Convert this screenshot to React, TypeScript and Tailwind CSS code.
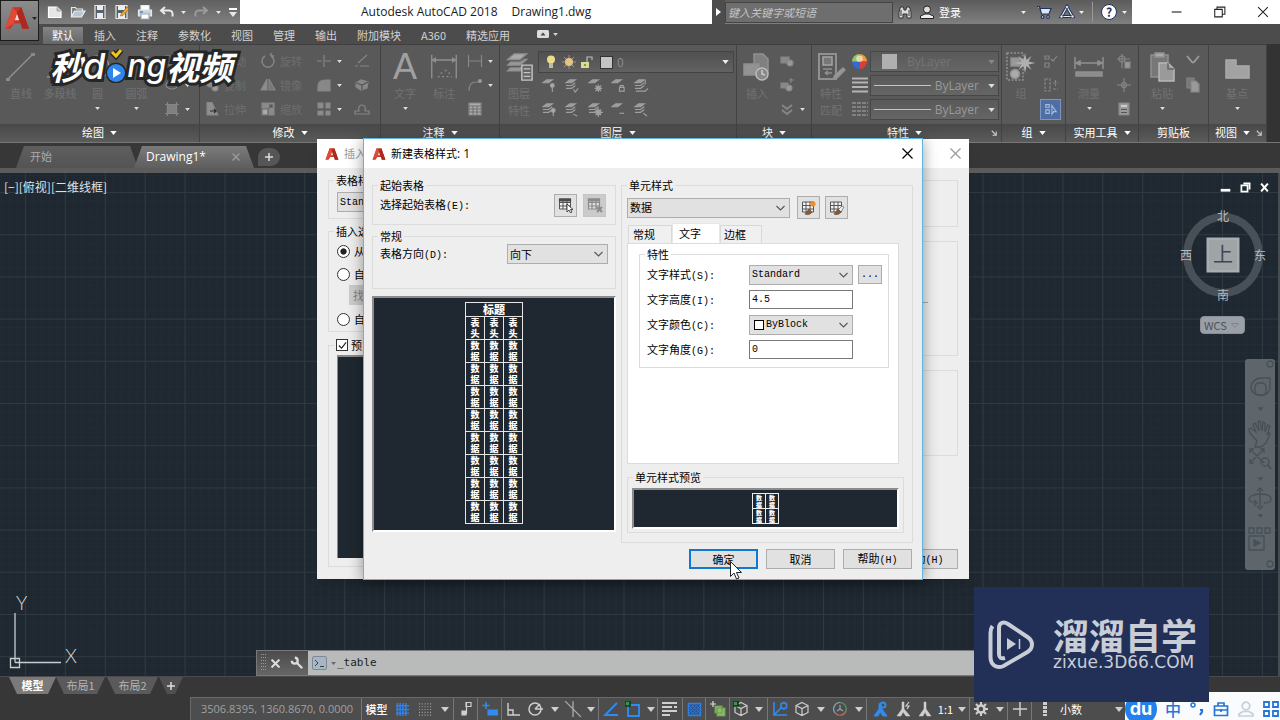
import React from "react";

type Kids = { children?: React.ReactNode };

/* ---------- small helpers ---------- */

function Tri({ className = "h-1 w-[7px]" }: { className?: string }) {
  return (
    <svg viewBox="0 0 8 5" className={`${className} shrink-0`} fill="currentColor" aria-hidden="true">
      <path d="M0 0h8L4 5z" />
    </svg>
  );
}

function I16({ children, className = "h-4 w-4" }: Kids & { className?: string }) {
  return (
    <svg viewBox="0 0 16 16" className={`${className} shrink-0`} fill="none" stroke="currentColor" strokeWidth="1.2" aria-hidden="true">
      {children}
    </svg>
  );
}

function I32({ children, className = "h-8 w-8" }: Kids & { className?: string }) {
  return (
    <svg viewBox="0 0 32 32" className={`${className} shrink-0`} fill="none" stroke="currentColor" strokeWidth="1.5" aria-hidden="true">
      {children}
    </svg>
  );
}

function ALogo({ className = "h-[14px] w-[14px]" }: { className?: string }) {
  return (
    <svg viewBox="0 0 24 24" className={className} aria-hidden="true">
      <path d="M1 22 8 2h8l7 20h-6l-1.500-5H9l-3 5z" fill="#c8352a" />
      <path d="m8 2-7 20 8-5 3-10z" fill="#e04a38" />
      <path d="m12 8-2 6h4z" fill="#f4dcd7" />
      <path d="M16 2 12 7l5 15h6z" fill="#ad281e" />
    </svg>
  );
}

/* ---------- title bar ---------- */

function QuickAccess() {
  return (
    <div className="flex h-6 w-[201px] shrink-0 items-center bg-gradient-to-b from-[#606060] to-[#808080] pl-1 text-[#e8e8e8]">
      <button aria-label="新建" className="flex w-[23px] justify-center">
        <I16><path d="M1.500 3h8.500l4 4v6.500H1.500z" fill="#e6e6e6" stroke="#fff" /><path d="M10 3v4h4" fill="#bbb" stroke="#999" strokeWidth=".8" /></I16>
      </button>
      <button aria-label="打开" className="flex w-[23px] justify-center">
        <I16><path d="M1.500 13V3.500h4l1 1.500h6v2" fill="#777" /><path d="m1.500 13 3-6h10.500l-3.500 6z" fill="#b9c6d3" stroke="#eee" /></I16>
      </button>
      <button aria-label="保存" className="flex w-[22px] justify-center">
        <I16><path d="M3 1.500h10v13H3z" fill="#56616e" stroke="#e8e8e8" /><path d="M5 2h6v4H5zM5 9h6v5H5z" fill="#eee" stroke="none" /></I16>
      </button>
      <button aria-label="另存为" className="flex w-[22px] justify-center">
        <I16><path d="M2 1.500h11v13H2z" fill="#56616e" stroke="#e8e8e8" /><path d="M4 2h7v4H4zM4 9h7v5H4z" fill="#eee" stroke="none" /><path d="m7 10 6-7 2 2-6 6.500-2.500.5z" fill="#f0a830" stroke="#7a5518" strokeWidth=".5" /></I16>
      </button>
      <button aria-label="打印" className="flex w-6 justify-center">
        <I16><path d="M4 1.500h8V6H4z" fill="#fff" /><path d="M1.500 6h13v6h-13z" fill="#c9d2dc" /><path d="M4 10h8v5H4z" fill="#fff" stroke="#9ab" /><path d="M3 8h3" stroke="#3d6fa8" /></I16>
      </button>
      <button aria-label="放弃" className="flex w-5 justify-center">
        <I16><path d="M6 3 2 6.500 6 10M2 6.500h8c3 0 4 2 3.500 6" strokeWidth="2" /></I16>
      </button>
      <Tri className="mx-1 h-[3px] w-[5px]" />
      <button aria-label="重做" className="flex w-[22px] justify-center text-[#9a9a9a]">
        <I16><path d="m10 3 4 3.500-4 3.500M14 6.500H6c-3 0-4 2-3.500 6" strokeWidth="2" /></I16>
      </button>
      <Tri className="mx-1 h-[3px] w-[5px]" />
      <button aria-label="自定义" className="ml-1 flex flex-col items-center gap-[2px]">
        <span className="h-[2px] w-2 bg-white" />
        <Tri className="h-[5px] w-2" />
      </button>
    </div>
  );
}

function TitleBar() {
  return (
    <div className="flex h-6 bg-white">
      <QuickAccess />
      <div className="flex min-w-0 flex-1 items-center gap-[14px] pl-[121px] text-[12px] whitespace-nowrap text-[#1c1c1c] [font-family:'Open_Sans','Noto_Sans_CJK_SC',sans-serif]">
        <span>Autodesk AutoCAD 2018</span>
        <span>Drawing1.dwg</span>
      </div>
      <div className="flex h-6 w-[420px] shrink-0 items-center bg-gradient-to-b from-[#5c5c5c] to-[#808080] text-[#eee]">
        <button aria-label="展开" className="flex h-6 w-[13px] items-center justify-center bg-[#4d4d4d]">
          <svg viewBox="0 0 5 8" className="h-2 w-[5px]" fill="#fff"><path d="M0 0v8l5-4z" /></svg>
        </button>
        <input aria-label="搜索" placeholder="键入关键字或短语" className="h-[21px] w-[168px] border border-[#444] bg-[#6e6e6e] pl-[2px] text-[11px] italic outline-none placeholder:text-[#c4c4c4]" />
        <button aria-label="查找" className="ml-1 flex w-4">
          <I16><path d="M2 14V8l1.500-5h3L7 6h2l.5-3h3L14 8v6h-4v-4H6v4z" fill="#ddd" stroke="#333" strokeWidth="1" /><path d="M4 6v6M12 6v6" stroke="#555" /></I16>
        </button>
        <button className="ml-[6px] flex items-center gap-1 text-[11px] text-white">
          <I16><circle cx="8" cy="5.500" r="3.500" fill="#ddd" stroke="#222" strokeWidth="1" /><path d="M1.500 14.500V12l4.500-2h4l4.500 2v2.500z" fill="#eee" stroke="#222" strokeWidth="1" /></I16>
          登录
        </button>
        <Tri className="mr-[10px] ml-auto h-[3px] w-[5px]" />
        <button aria-label="商店" className="flex w-4">
          <I16><path d="M1 2.500h2.500L5.500 10h7.500l2-5.500H4" fill="#dfe6f2" stroke="#1f3560" /><circle cx="6.500" cy="13" r="1.300" fill="#fff" stroke="#1f3560" /><circle cx="12" cy="13" r="1.300" fill="#fff" stroke="#1f3560" /></I16>
        </button>
        <button aria-label="应用" className="ml-[7px] flex w-4">
          <I16><path d="m8 3-5.500 9.500h11z" stroke="#1f3560" strokeWidth="3.200" /><path d="m8 3-5.500 9.500h11z" stroke="#e4e9f4" strokeWidth="1.200" /><circle cx="8" cy="3" r="1.600" fill="#e4e9f4" stroke="#1f3560" strokeWidth=".7" /><circle cx="2.500" cy="12.500" r="1.600" fill="#e4e9f4" stroke="#1f3560" strokeWidth=".7" /><circle cx="13.500" cy="12.500" r="1.600" fill="#e4e9f4" stroke="#1f3560" strokeWidth=".7" /></I16>
        </button>
        <Tri className="mx-1 h-[3px] w-[5px]" />
        <span className="mx-1 h-5 w-px bg-[#999]" />
        <button aria-label="帮助" className="ml-1 flex h-4 w-4 items-center justify-center rounded-full border border-[#1f3560] bg-white text-[12px] leading-none font-bold text-[#1f3560]">?</button>
        <Tri className="mr-[5px] ml-[5px] h-[3px] w-[5px]" />
      </div>
      <div className="flex w-[148px] shrink-0 items-center bg-white pl-[39px] text-[#222]">
        <button aria-label="最小化" className="flex w-[43px]"><I16 className="h-3 w-3"><path d="M1 8h13" strokeWidth="1.500" /></I16></button>
        <button aria-label="还原" className="flex w-[43px]"><I16 className="h-3 w-3"><path d="M1 4.500h10v10H1zM4 4.500V1.500h10.500V11H11" strokeWidth="1.400" /></I16></button>
        <button aria-label="关闭" className="flex"><I16 className="h-3 w-3"><path d="m1.500 1.500 13 13m0-13-13 13" strokeWidth="1.400" /></I16></button>
      </div>
    </div>
  );
}

const RIBBON_TABS = ["默认", "插入", "注释", "参数化", "视图", "管理", "输出", "附加模块", "A360", "精选应用"];

function RibbonTabs() {
  return (
    <nav className="flex h-5 items-end gap-[2px] bg-[#4c4c4c] pl-1 text-[11px] text-[#d2d2d2]">
      {RIBBON_TABS.map((t, i) => (
        <button
          key={t}
          className={
            i === 0
              ? "h-[17px] bg-gradient-to-b from-[#858585] to-[#666] px-[9px] leading-[15px] text-white"
              : "h-[17px] px-[9px] leading-[15px]"
          }
        >
          {t}
        </button>
      ))}
      <button aria-label="功能区选项" className="mb-[6px] ml-4 flex items-center gap-1">
        <svg viewBox="0 0 12 8" className="h-2 w-3"><rect width="12" height="8" rx="1.500" fill="#ddd" /><path d="m3.500 5.500 2.500-3 2.500 3z" fill="#444" /></svg>
        <Tri className="h-[3px] w-[5px]" />
      </button>
    </nav>
  );
}

/* ---------- ribbon ---------- */

function Panel({ title, width, arrow = true, launcher, children }: Kids & { title: string; width: string; arrow?: boolean; launcher?: boolean }) {
  return (
    <section className={`${width} flex h-full shrink-0 flex-col border-r border-[#424242]`}>
      <div className="flex h-[80px] items-start border-t border-[#3f3f3f] bg-[#595959] pt-1">{children}</div>
      <h2 className="flex flex-1 items-center justify-center gap-[6px] bg-gradient-to-b from-[#484848] to-[#5b5b5b] pb-px text-[11px] leading-none text-white">
        {launcher && <span className="w-2 flex-1" />}
        {title}
        {arrow && <Tri className="h-1 w-[7px]" />}
        {launcher && (
          <span className="flex flex-1 justify-end pr-1">
            <svg viewBox="0 0 8 8" className="h-[6px] w-[6px]" fill="none" stroke="#ccc" strokeWidth="1.500"><path d="m1 1 5.500 5.500M7 2v5H2" /></svg>
          </span>
        )}
      </h2>
    </section>
  );
}

function Big({ icon, label, label2, arrow, width = "w-[39px]" }: { icon: React.ReactNode; label: string; label2?: string; arrow?: boolean; width?: string }) {
  return (
    <button className={`${width} flex shrink-0 flex-col items-center text-[#909090]`}>
      <span className="flex h-9 items-center">{icon}</span>
      <span className="text-[11px] leading-[17px] whitespace-nowrap text-[#727272]">{label}</span>
      {label2 && <span className="text-[11px] leading-[17px] text-[#727272]">{label2}</span>}
      {arrow && <span className="flex h-3 items-center text-[#ddd]"><Tri className="h-[3px] w-[5px]" /></span>}
    </button>
  );
}

function Small({ icon, label, arrow, on }: { icon: React.ReactNode; label?: string; arrow?: boolean; on?: boolean }) {
  return (
    <button className="flex h-6 items-center gap-1 text-[#868686]" aria-label={label ?? "工具"}>
      <span className={on ? "flex h-[21px] w-[21px] items-center justify-center border border-[#7b96c4] bg-[#4f6ea3]" : "flex"}>{icon}</span>
      {label && <span className="text-[11px] text-[#6e6e6e]">{label}</span>}
      {arrow && <Tri className="ml-px h-[3px] w-[5px] text-[#ddd]" />}
    </button>
  );
}

function Col({ children, className = "" }: Kids & { className?: string }) {
  return <div className={`flex shrink-0 flex-col ${className}`}>{children}</div>;
}

function LayerMini({ children, full }: Kids & { full?: boolean }) {
  return (
    <button aria-label="图层工具" className="flex w-[23px] justify-center text-[#a0a0a0]">
      <svg viewBox="0 0 16 16" className="h-[15px] w-[15px]" fill="none" stroke="currentColor" strokeWidth="1.200">
        <path d="m1 5 4-3h6L7 5z" fill="#9c9c9c" />
        {full && <path d="M1 8h6l4-3M1 11h6l4-3" />}
        {children}
      </svg>
    </button>
  );
}

function ByLayerRow({ dim }: { dim?: boolean }) {
  return (
    <div className="flex h-[21px] items-center gap-1 border border-[#474747] bg-gradient-to-b from-[#5a5a5a] to-[#656565] px-[3px]">
      {dim ? <span className="ml-2 h-[15px] w-[15px] bg-[#b0b0b0]" /> : <span className="h-px flex-1 bg-[#c4c4c4]" />}
      <span className={dim ? "ml-[6px] flex-1 text-[12px] text-[#747474] [font-family:'Open_Sans',sans-serif]" : "text-[12px] text-[#999] [font-family:'Open_Sans',sans-serif]"}>ByLayer</span>
      <span className={dim ? "flex w-3 justify-end text-[#888]" : "flex w-3 justify-end text-[#ddd]"}><Tri className="h-1 w-[7px]" /></span>
    </div>
  );
}

function Ribbon() {
  return (
    <div className="flex h-[99px] shrink-0 border-b border-[#777] bg-gradient-to-r from-[#555] via-[#555] to-[#333]">
      <Panel title="绘图" width="w-[200px]">
        <Big label="直线" width="w-[42px]" icon={<I32><path d="M3 28 28 3" /><path d="M1 27h4v3H1zM26 2h4v3h-4z" fill="#8a8a8a" stroke="none" /></I32>} />
        <Big label="多段线" width="w-9" icon={<I32><path d="M3 26h12V10h10" /></I32>} />
        <Big label="圆" arrow icon={<I32><circle cx="16" cy="16" r="11" /></I32>} />
        <Big label="圆弧" arrow icon={<I32><path d="M5 27C7 14 14 7 28 6" /></I32>} />
        <Col className="ml-2">
          <Small arrow icon={<I16><path d="M2 3h12v9H2z" /></I16>} />
          <Small arrow icon={<I16><ellipse cx="8" cy="8" rx="6" ry="4" /></I16>} />
          <Small arrow icon={<I16><path d="M3.500 3.500h9v9h-9z" fill="#808080" /><path d="M1 3.500h14M1 12.500h14M3.500 1v14M12.500 1v14" /></I16>} />
        </Col>
      </Panel>
      <Panel title="修改" width="w-[181px]">
        <Col className="ml-1 w-[56px]">
          <Small label="移动" icon={<I16><path d="M8 1v14M1 8h14" /></I16>} />
          <Small label="复制" icon={<I16><circle cx="6" cy="7" r="3" fill="#8c8c8c" /><circle cx="11" cy="11" r="3" fill="#999" /></I16>} />
          <Small label="拉伸" icon={<I16><path d="M3 1.500h5l6 12.500H3z" fill="#8e8e8e" /><path d="M6 10h6m-2-2 2 2-2 2" stroke="#2c2c2c" /></I16>} />
        </Col>
        <Col className="w-[54px]">
          <Small label="旋转" icon={<I16><path d="M5 3a6 6 0 1 0 6 0M11 3V0M11 3h3" strokeWidth="1.500" /></I16>} />
          <Small label="镜像" icon={<I16><path d="m7 2v11H1z" fill="#8e8e8e" /><path d="m9 2v11h6z" fill="#777" /></I16>} />
          <Small label="缩放" icon={<I16><path d="M2 2h12v12H2z" fill="#8a8a8a" /><path d="M2 8h6v6H2z" fill="#aaa" stroke="#666" /><path d="m9 7 3-3m-3 0h3v3" stroke="#555" /></I16>} />
        </Col>
        <Col className="ml-[2px] w-[38px]">
          <Small arrow icon={<I16><path d="M1 8h5M9 8h6M8 2v12" /></I16>} />
          <Small arrow icon={<I16><path d="M2 14V9c0-4 3-6 7-6h5v11z" fill="#888" /></I16>} />
          <Small arrow icon={<I16><path d="M2 2h5v5H2zM10 2h4v5h-4zM2 10h5v4H2zM10 10h4v4h-4z" fill="#8c8c8c" /></I16>} />
        </Col>
        <Col>
          <Small icon={<I16><path d="M1 13h3M6 13h9M4 10l9-8" /></I16>} />
          <Small icon={<I16><path d="m2 6 5-3 7 2-1 6-6 2-5-3z" fill="#888" /><path d="m2 6 6 2 6-3M8 8v5" stroke="#555" /></I16>} />
          <Small icon={<I16><path d="M1 13h14v-3h-4c1-3 0-6-3-6S4 7 5 10H1z" /></I16>} />
        </Col>
      </Panel>
      <Panel title="注释" width="w-[119px]">
        <Big label="文字" arrow width="w-12" icon={<span className="text-[36px] leading-9 text-[#a0a0a0] [font-family:'Liberation_Sans',sans-serif]">A</span>} />
        <Big label="标注" width="w-[30px]" icon={<I32 className="h-7 w-7"><path d="M2 2v27M30 2v27M3 8h26M3 8l3-2v4zM29 8l-3-2v4z" /><path d="M12 23h2m3-3h2m2 3h2M9 27h2m3 0h2m3 0h2m3 0h1" /></I32>} />
        <Col className="ml-2">
          <Small arrow icon={<I16><path d="M1.500 2v12M14.500 2v12M2 8h12" /></I16>} />
          <Small arrow icon={<I16><path d="M2 14c0-6 2-9 7-9h4" /><circle cx="13" cy="4" r="2" fill="#999" stroke="none" /></I16>} />
          <Small icon={<I16><path d="M2 2h12v12H2z" fill="#aaa" /><path d="M2 5h12M2 8h12M2 11h12M6 5v9M10 5v9" stroke="#666" strokeWidth=".8" /></I16>} />
        </Col>
      </Panel>
      <Panel title="图层" width="w-[237px]">
        <Big label="图层" label2="特性" width="w-[38px]" icon={<I32 className="h-[30px] w-[30px]"><path d="m4 8 7-6h13l-7 6z" fill="#aaa" /><path d="m4 14 3-3h10l5-3h2l-7 6zM4 20l3-3h10l2-1v3l-2 1z" fill="#999" /><path d="M19 14h11v16H19z" fill="#666" stroke="#c4c4c4" /><path d="M21 18h7m-7 4h7m-7 4h7" stroke="#c4c4c4" /></I32>} />
        <div className="flex flex-1 flex-col pr-[2px]">
          <div className="mt-[2px] flex h-[22px] items-center border border-[#444] bg-gradient-to-b from-[#505050] to-[#616161] pr-1 pl-1 text-[12px] text-[#8b8b8b]">
            <I16><circle cx="8" cy="5.500" r="4" fill="#e9dc8a" stroke="none" /><path d="M6 9h4v5H6z" fill="#bba" stroke="none" /></I16>
            <I16 className="ml-[2px] h-4 w-4"><path d="M8 1v14M1 8h14M3 3l10 10M13 3 3 13" stroke="#b8a583" strokeWidth=".8" /><circle cx="8" cy="8" r="4" fill="#e3c48a" stroke="none" /></I16>
            <I16 className="ml-[2px] h-4 w-4"><path d="M2 8h8v6H2z" fill="#d9dc8c" stroke="none" /><path d="M8 8V3h5v3" stroke="#bbb" /><path d="M6 10v2" stroke="#555" /></I16>
            <span className="ml-[5px] h-[13px] w-[13px] border border-[#333] bg-[#c4c4c4]" />
            <span className="ml-1 flex-1">0</span>
            <span className="text-[#eee]"><Tri className="h-1 w-[7px]" /></span>
          </div>
          <div className="flex h-6 items-center text-[#999]">
            <LayerMini><circle cx="11" cy="8" r="2" fill="#aaa" /><path d="M11 10v5" /></LayerMini>
            <LayerMini full><path d="m9 12 2 3 3-4" /></LayerMini>
            <LayerMini><circle cx="11" cy="11" r="2" fill="#888" /><path d="M11 7v8M7 11h8M8 8l6 6M14 8l-6 6" /></LayerMini>
            <LayerMini><path d="M9 10h5v4H9zM10 10V8h3v2" /></LayerMini>
            <LayerMini full><path d="M2 14h10l3-3M12 2v5" /></LayerMini>
          </div>
          <div className="flex h-6 items-center text-[#999]">
            <LayerMini full><circle cx="12" cy="9" r="2" fill="#aaa" /><path d="M12 11v4" /></LayerMini>
            <LayerMini full><path d="m9 13 4 2" /></LayerMini>
            <LayerMini full><circle cx="11" cy="11" r="2.500" fill="#888" /><path d="M11 6v10M6 11h10M8 8l6 6M14 8l-6 6" /></LayerMini>
            <LayerMini><path d="M9 12h5" /></LayerMini>
            <LayerMini full><path d="m10 12 4 3" /></LayerMini>
          </div>
        </div>
      </Panel>
      <Panel title="块" width="w-[75px]">
        <Big label="插入" width="w-[40px]" icon={<I32><path d="M13 3h9l5 5v14H13z" fill="#808080" /><path d="M3 13h15v11H3z" fill="#939393" /><circle cx="21" cy="23" r="6" fill="#888" stroke="#bbb" /><path d="M21 19v4l3 1" stroke="#ccc" /></I32>} />
        <Col className="ml-[2px]">
          <Small icon={<I16><path d="M2 4h8v6H2z" fill="#888" /><circle cx="11" cy="10" r="3" fill="#999" /></I16>} />
          <Small icon={<I16><path d="M2 6h7v5H2z" fill="#888" /><circle cx="10" cy="11" r="3" fill="#999" /><path d="M12 1v5M10 3h5" /></I16>} />
          <Small arrow icon={<I16><path d="m3 4 5 4 5-4M3 9l5 4 5-4" strokeWidth="2" /></I16>} />
        </Col>
      </Panel>
      <Panel title="特性" width="w-[190px]" launcher>
        <Big label="特性" label2="匹配" width="w-[38px]" icon={<I32><path d="M4 3h17v25H4z" strokeWidth="2" /><path d="M8 6h9v8H8z" fill="#777" stroke="#a5a5a5" /><path d="M8 18h9m-7 4 3-2m-3 2 3 2m-3-2h7" /><path d="m20 24 8-7 2 2-8 8-4 1z" fill="#999" /></I32>} />
        <Col className="ml-[2px] w-[18px]">
          <div className="flex h-6 items-center">
            <svg viewBox="0 0 16 16" className="h-[15px] w-[15px]" aria-hidden="true">
              <path d="M8 8V0a8 8 0 0 1 8 8z" fill="#ef9a3c" /><path d="M8 8h8a8 8 0 0 1-8 8z" fill="#d8403c" /><path d="M8 8v8a8 8 0 0 1-8-8z" fill="#3568d8" /><path d="M8 8H0a8 8 0 0 1 8-8z" fill="#8fc86a" /><circle cx="8" cy="5" r="3.500" fill="#f6edd0" opacity=".7" />
            </svg>
          </div>
          <Small icon={<I16><path d="M0 1.500h16M0 5.500h16M0 10h16M0 14.500h16" strokeWidth="2.200" stroke="#b4b4b4" /></I16>} />
          <Small icon={<I16><path d="M0 2h16M0 6h16M0 10h16M0 14h16" strokeDasharray="4 1" stroke="#aaa" /></I16>} />
        </Col>
        <div className="flex flex-1 flex-col gap-[3px] pt-[2px] pr-[2px]">
          <ByLayerRow dim />
          <ByLayerRow />
          <ByLayerRow />
        </div>
      </Panel>
      <Panel title="组" width="w-[64px]">
        <Big label="组" width="w-[38px]" icon={<I32><path d="M2 2h16v27H2z" strokeDasharray="2 1.500" /><path d="M6 7h9v8H6z" fill="#999" /><circle cx="10" cy="23" r="4.500" fill="#aaa" /><path d="m20 2 1.500 7 5-4-3 5.500 7 1.500-7 1.500 3 5.500-5-4-1.500 7-1.500-7-5 4 3-5.500-7-1.500 7-1.500-3-5.500 5 4z" fill="#b0b0b0" stroke="none" /></I32>} />
        <Col className="items-center">
          <Small icon={<I16><path d="M2 3h4v3H2zM2 10h4v4H2zM8 6l2 2 4-5" /></I16>} />
          <Small icon={<I16><path d="M2 2h5v12H2zM10 6h5M12.500 3v6M10 12h5" strokeDasharray="3 1" /></I16>} />
          <Small on icon={<I16 className="h-[14px] w-[14px] text-[#a9bddf]"><path d="M2 3h4v3H2zM2 9h4v4H2zM9 4v10l2-3h3z" /></I16>} />
        </Col>
      </Panel>
      <Panel title="实用工具" width="w-[73px]">
        <Big label="测量" arrow width="w-[46px]" icon={<I32><path d="M2 6v12M30 6v12M3 12h26M3 12l4-2v4zM29 12l-4-2v4z" /><path d="M3 21h26v4H3z" fill="#8c8c8c" /></I32>} />
        <Col className="ml-1">
          <Small icon={<I16><path d="M6 1v14M1 6h13" /><circle cx="6" cy="6" r="3" /><path d="M9 9h5v6H9z" fill="#999" /></I16>} />
          <Small icon={<I16><path d="M8 1v14M1 8h14" /><circle cx="8" cy="8" r="2.500" /></I16>} />
          <Small icon={<I16><path d="M3 2h10v12H3z" fill="#9a9a9a" /><path d="M5 4h6v2H5z" fill="#ccc" stroke="none" /><path d="M5 8.500h6M5 11.500h6" stroke="#555" /></I16>} />
        </Col>
      </Panel>
      <Panel title="剪贴板" width="w-[70px]" arrow={false}>
        <Big label="粘贴" arrow width="w-[46px]" icon={<I32><path d="M5 4h17v22H5z" fill="#777" /><path d="M9 2h9v4H9z" fill="#aaa" /><path d="M13 12h9l6 6v12H13z" fill="#9a9a9a" stroke="#b8b8b8" /><path d="M22 12v6h6" stroke="#666" /></I32>} />
        <Col>
          <Small icon={<I16><path d="m2 3 5 6 1 .5 1-.5 5-6" strokeWidth="1.800" stroke="#9c9c9c" /></I16>} />
          <Small icon={<I16><path d="M2 1h7v10H2z" fill="#777" /><path d="M6 4h5l3 3v8H6z" fill="#999" /></I16>} />
        </Col>
      </Panel>
      <Panel title="视图" width="w-[58px]" launcher>
        <Big label="基点" arrow width="w-14" icon={<I32><path d="M5 9h10v6h13v12H5z" fill="#a2a2a2" stroke="#ababab" /></I32>} />
      </Panel>
    </div>
  );
}

/* ---------- drawing area ---------- */

function FileTabs() {
  return (
    <div className="flex h-[30px] shrink-0 flex-col border-b-[5px] border-[#5c5c5c] bg-[#373737] pt-[3px]">
      <div className="flex h-[22px] items-stretch pl-4 text-[12px] [font-family:'Open_Sans','Noto_Sans_CJK_SC',sans-serif]">
        <button className="w-[122px] rounded-t-lg bg-gradient-to-b from-[#5f5f5f] to-[#545454] pl-[14px] text-left text-[11px] text-[#aaa] [clip-path:polygon(8px_0,calc(100%-8px)_0,100%_100%,0_100%)]">开始</button>
        <div className="-ml-1 flex w-[120px] items-center rounded-t-lg bg-gradient-to-b from-[#7b7b7b] to-[#5e5e5e] pr-[14px] pl-3 text-white [clip-path:polygon(8px_0,calc(100%-8px)_0,100%_100%,0_100%)]">
          <span className="flex-1">Drawing1*</span>
          <button aria-label="关闭图形" className="flex text-[#999]"><I16 className="h-2 w-2"><path d="m1 1 14 14M15 1 1 15" strokeWidth="3" /></I16></button>
        </div>
        <button aria-label="新图形" className="my-[2px] ml-1 flex w-[22px] items-center justify-center rounded-t-xl rounded-br-xl bg-[#565656] text-[#ddd]"><I16 className="h-2 w-2"><path d="M8 0v16M0 8h16" strokeWidth="3" /></I16></button>
      </div>
    </div>
  );
}

function Grid() {
  return (
    <svg className="absolute inset-0 h-full w-full" aria-hidden="true">
      <defs>
        <pattern id="minor" width="7.980" height="8.440" patternUnits="userSpaceOnUse" patternTransform="translate(25 19)">
          <path d="M0 0v9M0 0h8" stroke="#232d36" strokeWidth="1" fill="none" />
        </pattern>
        <pattern id="major" width="39.900" height="42.200" patternUnits="userSpaceOnUse" patternTransform="translate(25 19)">
          <path d="M.5 0v43M0 .5h40" stroke="#2e3942" strokeWidth="1" fill="none" />
        </pattern>
      </defs>
      <rect width="100%" height="100%" fill="url(#minor)" />
      <rect width="100%" height="100%" fill="url(#major)" />
    </svg>
  );
}

function ViewCube() {
  return (
    <svg viewBox="0 0 94 100" className="h-[100px] w-[94px] text-[12px]" aria-label="ViewCube">
      <ellipse cx="47" cy="50" rx="36" ry="38" fill="none" stroke="#474f57" strokeWidth="8" />
      <rect x="30.500" y="32.500" width="33" height="35" fill="#a9aeb0" />
      <rect x="33" y="35" width="28" height="30" fill="#9fa5a7" />
      <g textAnchor="middle" fill="#b6b9bb" className="[font-family:'Noto_Sans_CJK_SC',sans-serif]">
        <text x="47" y="16">北</text>
        <text x="10" y="55">西</text>
        <text x="84" y="55">东</text>
        <text x="47" y="95">南</text>
        <text x="47" y="57" fontSize="20" fill="#40474c">上</text>
      </g>
    </svg>
  );
}

function NavBar() {
  return (
    <div className="flex h-[211px] w-[30px] flex-col items-center rounded-[3px] bg-[#5e666c] text-[#485057]">
      <svg viewBox="0 0 30 211" className="h-full w-full" fill="none" stroke="currentColor" strokeWidth="1.300" aria-label="导航栏">
        <circle cx="25" cy="5" r="3" />
        <path d="M6 29a10 10 0 0 1 10-10h9v11a10 10 0 0 1-19-1z" />
        <rect x="10" y="24" width="11" height="12" rx="4" />
        <path d="m14 49 1.500 2 1.500-2z" fill="currentColor" />
        <path d="M12 82 5 74l-1-4 2-1 5 4-3-8 2-1 4 8-1-9 2-1 2 10 1-9 2 1v9l3-7 2 1-3 9 2-2 1 1-4 9-5 4h-6z" />
        <path d="m5 90 14 14M19 90 5 104M5 94v-4h4M15 90h4v4M5 100v4h4" />
        <circle cx="20" cy="103" r="4" /><path d="m23 106 3 4" strokeWidth="2" />
        <path d="m14 119 1.500 2 1.500-2z" fill="currentColor" />
        <path d="M12 144c-5 0-8-2-8-4s4-5 11-5 11 2 11 5-3 4-7 4M15 129v19M12 132l3-3 3 3M9 141l3 3-3 3M12 147l3 3 3-3" />
        <path d="m14 156 1.500 2 1.500-2z" fill="currentColor" />
        <path d="M4 169h5v5H4zM12 169h5v5h-5zM20 169h5v5h-5zM4 177h15v14H4z" /><path d="M9 181v6l6-3z" fill="currentColor" />
        <circle cx="25" cy="205" r="3" />
      </svg>
    </div>
  );
}

function CommandLine() {
  return (
    <div className="absolute bottom-0 left-[256px] flex h-[26px] w-[766px] max-w-full items-stretch border border-[#767a7a] bg-[#b8bbba]">
      <div className="flex w-[51px] items-center bg-gradient-to-b from-[#4b4b4b] to-[#666] pl-1 text-[#ddd]">
        <svg viewBox="0 0 6 18" className="h-[18px] w-[6px]" fill="#999"><path d="M0 0h1v1H0zM2 0h1v1H2zM4 0h1v1H4zM0 3h1v1H0zM2 3h1v1H2zM4 3h1v1H4zM0 6h1v1H0zM2 6h1v1H2zM4 6h1v1H4zM0 9h1v1H0zM2 9h1v1H2zM4 9h1v1H4zM0 12h1v1H0zM2 12h1v1H2zM4 12h1v1H4zM0 15h1v1H0zM2 15h1v1H2zM4 15h1v1H4z" /></svg>
        <button aria-label="关闭命令行" className="ml-1 flex"><I16 className="h-[9px] w-[9px]"><path d="m1 1 14 14M15 1 1 15" strokeWidth="3.500" /></I16></button>
        <button aria-label="自定义" className="ml-[10px] flex"><svg viewBox="0 0 16 16" className="h-[14px] w-[14px]" fill="none" stroke="currentColor" strokeWidth="2.600"><path d="M7.500 7.500 14 14" /><path d="M2 5.500A3.400 3.400 0 1 0 5.500 2" /></svg></button>
      </div>
      <label className="flex flex-1 items-center pl-1 text-[#222]">
        <svg viewBox="0 0 15 14" className="h-[14px] w-[15px]"><rect x=".5" y=".5" width="14" height="13" rx="1.500" fill="#a8b5c2" stroke="#7d8996" /><path d="m3 4 3 3-3 3M8 10.500h4" stroke="#34404c" fill="none" /></svg>
        <span className="ml-1 text-[#666]"><Tri className="h-[3px] w-[5px]" /></span>
        <input aria-label="命令" defaultValue="_table" className="min-w-0 flex-1 bg-transparent pl-px text-[11px] outline-none [font-family:'DejaVu_Sans_Mono',monospace]" />
      </label>
    </div>
  );
}

function Canvas() {
  return (
    <main className="relative min-h-0 flex-1 overflow-hidden border-r-2 border-[#474c50] bg-[#1f2830]">
      <Grid />
      <div className="absolute top-[5px] left-1 text-[12px] text-[#dfe2e4]">[−][俯视][二维线框]</div>
      <div className="absolute top-[9px] right-[9px] flex items-center gap-[9px] text-white">
        <button aria-label="最小化图形" className="flex"><I16 className="h-[11px] w-[11px]"><path d="M1 12h14" strokeWidth="4" /></I16></button>
        <button aria-label="还原图形" className="flex"><I16 className="h-[11px] w-[11px]"><path d="M2 5h9v9H2zM5 2h9v9" strokeWidth="2.500" /></I16></button>
        <button aria-label="关闭图形窗口" className="flex"><I16 className="h-[9px] w-[9px]"><path d="m2 1 12 14M14 1 2 15" strokeWidth="3.500" /></I16></button>
      </div>
      <div className="absolute top-[32px] right-2"><ViewCube /></div>
      <button className="absolute top-[143px] right-[33px] flex h-[18px] w-[45px] items-center gap-1 rounded-[4px] border border-[#8b9097] bg-[#9a9fa8] pl-[3px] text-[11px] text-[#4d5258]">
        WCS
        <svg viewBox="0 0 8 5" className="h-[5px] w-2" fill="none" stroke="#80858c"><path d="M.5.5h7L4 4.500z" /></svg>
      </button>
      <div className="absolute top-[186px] right-[3px]"><NavBar /></div>
      <svg viewBox="0 0 80 96" className="absolute bottom-[3px] left-2 h-24 w-20" fill="none" stroke="#c9cdd0" strokeWidth="1.300" aria-label="UCS">
        <path d="M7 85.500V36M7 85.500h46M2.500 81.500h9v9h-9z" />
        <g fill="#d5d8da" stroke="none" fontSize="19" fontWeight="300" className="[font-family:'Lato',sans-serif]">
          <text x="8" y="33">Y</text>
          <text x="57" y="86">X</text>
        </g>
      </svg>
      <CommandLine />
    </main>
  );
}

/* ---------- bottom bars ---------- */

const trap = "[clip-path:polygon(0_0,100%_0,calc(100%-8px)_100%,8px_100%)]";

function LayoutTabs() {
  return (
    <div className="flex h-[21px] shrink-0 items-start border-t border-[#4a4a4a] bg-[#373737] pl-[9px] text-[11px]">
      <button className={`${trap} h-[17px] w-[47px] bg-[#7a7a7a] font-bold leading-[17px] text-white`}>模型</button>
      <button className={`${trap} h-[17px] w-[49px] bg-[#5a5a5a] leading-[17px] text-[#b5b5b5]`}>布局1</button>
      <button className={`${trap} ml-[2px] h-[17px] w-[51px] bg-[#5a5a5a] leading-[17px] text-[#b5b5b5]`}>布局2</button>
      <button aria-label="新建布局" className={`${trap} ml-px flex h-[17px] w-6 items-center justify-center bg-[#505050] text-[#ddd]`}><I16 className="h-2 w-2"><path d="M8 0v16M0 8h16" strokeWidth="3" /></I16></button>
    </div>
  );
}

function Cell({ w, sep, label, children }: Kids & { w: string; sep?: boolean; label: string }) {
  return (
    <button aria-label={label} className={`${w} ${sep ? "border-l border-[#777]" : ""} flex h-full shrink-0 items-center justify-center`}>
      {children}
    </button>
  );
}

const cube = <path d="m8 1.500 6 3v7l-6 3-6-3v-7zM2 4.500l6 3 6-3M8 7.500v7" />;
const Drop = ({ w }: { w: string }) => <Cell w={w} label="更多"><Tri className="h-[5px] w-2" /></Cell>;

function StatusBar() {
  return (
    <footer className="flex h-[23px] shrink-0 items-center bg-[#373737] pl-[190px] text-[11px] text-[#cfcfcf]">
      <div className="flex h-full min-w-0 flex-1 items-center border-t border-l border-[#6a6a6a] bg-[#4d4d4d]">
        <div className="w-[170px] shrink-0 pl-[10px] text-[11px] whitespace-nowrap text-[#a0a0a0] [font-family:'Open_Sans',sans-serif]">3506.8395, 1360.8670, 0.0000</div>
        <Cell w="w-[30px]" sep label="模型空间"><span className="font-medium text-white">模型</span></Cell>
        <Cell w="w-[23px]" label="栅格"><I16 className="h-[15px] w-[15px] text-[#2f7fe6]"><path d="M2.500 1v14M5.500 1v14M8.500 1v14M11.500 1v14M1 4h14M1 8h14M1 12h14" strokeWidth="1.700" /></I16></Cell>
        <Cell w="w-[22px]" label="捕捉"><I16 className="h-[15px] w-[15px] text-[#aaa]"><path d="M1 2h14M1 5h14M1 8h14M1 11h14M1 14h14" strokeDasharray="1 2" strokeWidth="1.200" /></I16></Cell>
        <Drop w="w-[17px]" />
        <Cell w="w-6" sep label="推断约束"><I16><path d="M8 1.500h5v4H8zM8.500 2v11" /><path d="M4 10h4v4H4z" fill="currentColor" /></I16></Cell>
        <Cell w="w-6" sep label="动态输入"><I16 className="h-4 w-4 text-[#2f8bf0]"><path d="M4 1v7M.5 4.500h7" strokeWidth="1.500" /><path d="M6 9h10v5H6z" fill="currentColor" /></I16></Cell>
        <Cell w="w-6" sep label="正交"><I16><path d="M2 2v12h12M2 9h5v5" strokeWidth="1.400" /></I16></Cell>
        <Cell w="w-[22px]" label="极轴"><I16><circle cx="7" cy="8" r="6" strokeWidth="1.500" /><path d="M7 8h8M7 8l5-5" strokeWidth="1.500" /></I16></Cell>
        <Drop w="w-[15px]" />
        <Cell w="w-[22px]" label="等轴测"><I16 className="h-[18px] w-[18px]"><path d="m1 1 14 14M8 1v14" stroke="#aaa" /></I16></Cell>
        <Drop w="w-[14px]" />
        <Cell w="w-6" sep label="追踪"><I16 className="h-4 w-4 text-[#2f8bf0]"><path d="M14 2 2 14h13" strokeWidth="1.800" /></I16></Cell>
        <Cell w="w-[22px]" label="对象捕捉"><I16 className="h-4 w-4 text-[#2f8bf0]"><path d="M3 4h11v11H3z" strokeWidth="1.900" /><path d="M0 0h5v5H0z" fill="#2c9a48" stroke="#0d3a1a" strokeWidth="1.600" /></I16></Cell>
        <Drop w="w-[13px]" />
        <Cell w="w-[25px]" sep label="线宽"><I16><path d="M0 2h15M0 6h10M12 6h3M0 10h15M0 14h8" strokeWidth="2.200" /></I16></Cell>
        <Cell w="w-[23px]" sep label="透明度"><I16 className="h-[15px] w-[15px] text-[#2f7fe6]"><path d="M1.500 1.500h13v13h-13z" fill="#26508c" /><path d="m1 5 4-4M1 9l8-8M1 13 13 1M3 15 15 3M7 15l8-8M11 15l4-4M11 1l4 4M7 1l8 8M3 1l12 12M1 3l12 12M1 7l8 8M1 11l4 4" strokeWidth="1" /></I16></Cell>
        <Cell w="w-6" sep label="选择循环"><I16><path d="M5 5h7v7H5zM7 7h8v8H7z" fill="#8fbf6f" stroke="#6c9950" /><path d="M3 0v6M0 3h6" stroke="#ddd" /></I16></Cell>
        <Cell w="w-[22px]" sep label="三维捕捉"><I16>{cube}<path d="M0 0h5v5H0z" fill="#2c9a48" stroke="#0d3018" strokeWidth="1.600" /></I16></Cell>
        <Drop w="w-[16px]" />
        <Cell w="w-[25px]" sep label="动态UCS"><I16 className="h-4 w-4 text-[#2f8bf0]"><path d="M2 1v13h13M2 14l7-7M9 3l3-1.500L14.500 3v3.500L12 8 9 6.500z" strokeWidth="1.600" /></I16></Cell>
        <Cell w="w-[20px]" label="过滤"><I16>{cube}</I16></Cell>
        <Drop w="w-[17px]" />
        <Cell w="w-[22px]" label="小控件"><I16><path d="M8 1.500A6.500 6.500 0 0 1 14 10" stroke="#5aa05a" /><path d="M14 10A6.500 6.500 0 0 1 3 12" stroke="#c96c50" /><path d="M3 12A6.500 6.500 0 0 1 8 1.500M8 8V4M8 8l3 2M8 8l-3 2" stroke="#8ab" /></I16></Cell>
        <Drop w="w-[15px]" />
        <Cell w="w-[26px]" sep label="注释可见性"><I16 className="h-4 w-4 text-[#2f8bf0]"><circle cx="11" cy="4" r="2.500" strokeWidth="2" /><path d="M7 2v6L2 15h4l2-4 3 4h4l-5-7" strokeWidth="1" fill="currentColor" /></I16></Cell>
        <Cell w="w-[22px]" label="自动缩放"><I16><path d="M7 1v7l-5 7h4l2-4 3 4h4l-6-7V1z" fill="currentColor" strokeWidth=".5" /><path d="m14 1-3 4h3l-2 3" /></I16></Cell>
        <Cell w="w-[22px]" label="注释比例图标"><I16><path d="M7 1v7l-5 7h4l2-4 2 4h4L9 8V1z" fill="currentColor" strokeWidth=".5" /></I16></Cell>
        <Cell w="w-[19px]" label="注释比例"><span className="text-white">1:1</span></Cell>
        <Drop w="w-[14px]" />
        <Cell w="w-[23px]" sep label="切换工作空间"><I16><circle cx="8" cy="8" r="3.500" strokeWidth="2.600" /><path d="M8 1v3M8 12v3M1 8h3M12 8h3M3 3l2 2M11 11l2 2M13 3l-2 2M5 11l-2 2" strokeWidth="2" /></I16></Cell>
        <Drop w="w-[15px]" />
        <Cell w="w-6" sep label="注释监视器"><I16><path d="M8 1v14M1 8h14" strokeWidth="1.500" /></I16></Cell>
        <Cell w="w-[26px]" sep label="单位"><I16><path d="M8 1v14" strokeWidth="4" strokeDasharray="3 1" /></I16></Cell>
        <div className="w-[55px] shrink-0 pl-[3px] text-white">小数</div>
        <Drop w="w-[14px]" />
      </div>
    </footer>
  );
}

function ImeBar() {
  return (
    <div className="absolute right-0 bottom-0 z-10 flex h-7 w-[155px] items-center bg-[#fafbfd] pt-[5px] text-[#2476d8]">
      <span className="flex h-8 w-8 shrink-0 items-center justify-center rounded-full bg-[#2380ec] text-[18px] font-bold text-white [font-family:'Inter',sans-serif]">du</span>
      <span className="ml-2 text-[16px] leading-4 font-medium">中</span>
      <I16 className="ml-2 h-4 w-4"><circle cx="4" cy="4" r="2" strokeWidth="1.500" /><path d="M11 9h2v2l-2 3" strokeWidth="2.200" /></I16>
      <I16 className="ml-2 h-4 w-4"><path d="M1.500 5h13v9.500h-13zM5 5V2h6v3M1.500 9h13M8 8v3" strokeWidth="1.700" /></I16>
      <I16 className="ml-[9px] h-4 w-4 text-[#c3cfdf]"><circle cx="8" cy="5" r="3.800" strokeWidth="1.700" /><path d="M1 15v-2l4-2.500h6l4 2.500v2z" strokeWidth="1.700" /></I16>
      <I16 className="ml-[9px] h-4 w-4"><path d="M1 1h5v5H1zM10 1h5v5h-5zM1 10h5v5H1zM10 10h5v5h-5z" strokeWidth="1.800" /></I16>
    </div>
  );
}

/* ---------- dialogs ---------- */

function Group({ title, className = "", children }: Kids & { title?: React.ReactNode; className?: string }) {
  return (
    <fieldset className={`${className} min-w-0 border border-[#dcdcdc]`}>
      {title && <legend className="ml-[5px] px-[2px] text-[11px] leading-4 whitespace-nowrap">{title}</legend>}
      {children}
    </fieldset>
  );
}

const mono = "[font-family:'Liberation_Mono','Noto_Sans_CJK_SC',monospace]";

function Lab({ id, text, k }: { id?: string; text: string; k: string }) {
  return (
    <label htmlFor={id} className="flex-1 text-[11px] whitespace-nowrap">
      {text}
      <span className={`${mono} text-[10px]`}>({k}):</span>
    </label>
  );
}

function Select({ id, value, width, latin, swatch, label }: { id: string; value: string; width: string; latin?: boolean; swatch?: boolean; label?: string }) {
  return (
    <div className={`${width} flex h-5 shrink-0 items-center border border-[#adadad] bg-[#e1e1e1] pr-1 pl-[2px]`}>
      {swatch && <span className="mr-[2px] ml-[2px] h-[10px] w-[10px] border border-black bg-white" />}
      <select id={id} aria-label={label} defaultValue={value} className={latin ? "min-w-0 flex-1 appearance-none bg-transparent text-[10px] outline-none [font-family:'Liberation_Mono',monospace]" : "min-w-0 flex-1 appearance-none bg-transparent text-[11px] outline-none"}>
        <option>{value}</option>
      </select>
      <svg viewBox="0 0 9 6" className="pointer-events-none h-[6px] w-[9px] shrink-0" fill="none" stroke="#555" strokeWidth="1.100"><path d="m.5 1 4 4 4-4" /></svg>
    </div>
  );
}

function Btn({ children, primary, className = "w-[69px]" }: Kids & { primary?: boolean; className?: string }) {
  return (
    <button className={`${className} ${primary ? "border-2 border-[#0f78d0]" : "border border-[#adadad]"} h-5 bg-[#e1e1e1] text-[11px] leading-none`}>
      {children}
    </button>
  );
}

function IconBtn({ children, label, off }: Kids & { label: string; off?: boolean }) {
  return (
    <button aria-label={label} disabled={off} className={off ? "flex h-[23px] w-[23px] items-center justify-center border border-[#c6c6c6] bg-[#cbcbcb] text-[#8a8a8a]" : "flex h-[23px] w-[23px] items-center justify-center border border-[#adadad] bg-[#e1e1e1] text-[#444]"}>
      {children}
    </button>
  );
}

const CloseX = () => (
  <svg viewBox="0 0 11 11" className="h-[11px] w-[11px]" fill="none" stroke="currentColor" strokeWidth="1.200"><path d="m.5.5 10 10m0-10-10 10" /></svg>
);

const radio = "h-[13px] w-[13px] shrink-0 appearance-none rounded-full border border-[#333] bg-white";

function InsertTableDialog() {
  return (
    <div role="dialog" aria-label="插入表格" className="absolute top-[139px] left-[317px] flex h-[440px] w-[652px] flex-col bg-[#eee] text-black shadow-lg">
      <div className="flex h-[29px] shrink-0 items-center gap-[5px] bg-white px-2 text-[11px] text-[#999]">
        <ALogo />
        <span className="flex-1">插入</span>
        <button aria-label="关闭" className="flex"><CloseX /></button>
      </div>
      <div className="flex flex-1 gap-3 px-[11px] pt-1 pb-[10px]">
        <div className="flex w-[230px] flex-col">
          <Group title="表格样" className="h-[47px]">
            <div className="pt-1 pl-2"><Select id="ts" label="表格样式" value="Standard" width="w-[140px]" latin /></div>
          </Group>
          <Group title="插入选" className="mt-1 h-[109px]">
            <div className="flex flex-col pl-2 text-[11px]">
              <label className="flex h-6 items-center gap-1"><input type="radio" name="ins" defaultChecked className="h-[13px] w-[13px] appearance-none rounded-full border border-[#333] bg-[radial-gradient(circle,#222_35%,#fff_45%)]" />从</label>
              <label className="flex h-[22px] items-center gap-1"><input type="radio" name="ins" className={radio} />自</label>
              <button disabled className="ml-3 h-5 w-[120px] bg-[#cccccc] pl-1 text-left text-[#838383]">找</button>
              <label className="mt-[2px] flex h-6 items-center gap-1"><input type="radio" name="ins" className={radio} />自</label>
            </div>
          </Group>
          <Group
            className="mt-[5px]"
            title={
              <label className="flex items-center gap-[3px]">
                <span className="flex h-3 w-3 items-center justify-center border border-[#333] bg-white">
                  <svg viewBox="0 0 10 10" className="h-[9px] w-[9px]" fill="none" stroke="#222" strokeWidth="1.300"><path d="m1 5 3 3 5-6.500" /></svg>
                  <input type="checkbox" defaultChecked className="sr-only" />
                </span>
                预览
              </label>
            }
          >
            <div className="mt-[2px] mb-2 ml-2 h-[203px] border-t-2 border-l border-[#8a8a8a] bg-[#1f2830]" />
          </Group>
        </div>
        <div className="flex flex-1 flex-col gap-[14px] pt-2">
          <Group className="h-[47px]" />
          <Group className="h-[115px] pt-[60px]">
            <div className="mr-[29px] border-t border-[#aaa]" />
          </Group>
          <Group className="h-[86px]" />
          <div className="mt-auto flex justify-end"><Btn>帮助<span className={`${mono} text-[10px]`}>(H)</span></Btn></div>
        </div>
      </div>
    </div>
  );
}

const cellCls = "w-[19px] border border-[#e5e5e5] p-0 text-center text-[9px] leading-[11px] font-black";

function PreviewTable() {
  return (
    <table className="h-[222px] border-collapse text-white">
      <tbody>
        <tr><th colSpan={3} className="border border-[#e5e5e5] p-0 text-[11px] leading-[13px] font-black">标题</th></tr>
        <tr>{[0, 1, 2].map((c) => <th key={c} className={cellCls}>表<br />头</th>)}</tr>
        {Array.from({ length: 8 }, (_, r) => (
          <tr key={r}>{[0, 1, 2].map((c) => <td key={c} className={cellCls}>数<br />据</td>)}</tr>
        ))}
      </tbody>
    </table>
  );
}

const gridIcon = <path d="M1.500 2h11v10h-11zM1.500 5.500h11M1.500 9h11M5 2v10M9 2v10" fill="#f4f4f4" stroke="#555" strokeWidth="1" />;

function NewTableStyleDialog() {
  return (
    <div role="dialog" aria-label="新建表格样式" className="absolute top-[138px] left-[363px] flex h-[442px] w-[560px] flex-col border border-[#5cb6e0] bg-[#eee] text-black shadow-[0_2px_14px_rgba(0,0,0,0.4)]">
      <div className="flex h-[29px] shrink-0 items-center gap-[5px] bg-white pr-[9px] pl-2 text-[12px]">
        <ALogo />
        <span className="flex-1 [font-family:'Open_Sans','Noto_Sans_CJK_SC',sans-serif]">
          <span className="text-[11px]">新建表格样式</span>: 1
        </span>
        <button aria-label="关闭" className="flex"><CloseX /></button>
      </div>
      <div className="flex h-[375px] shrink-0 gap-[5px] pt-[9px] pr-[9px] pl-2">
        <div className="flex w-[244px] shrink-0 flex-col">
          <Group title="起始表格" className="h-[48px]">
            <div className="flex h-6 items-center pr-[9px] pl-[7px]">
              <Lab text="选择起始表格" k="E" />
              <div className="flex gap-[6px]">
                <IconBtn label="选择表格"><I16>{gridIcon}<path d="M1.500 2h11v2h-11z" fill="#555" /><path d="M9 7v8l2-2 1.500 3 1.500-1-1.500-2.500H15z" fill="#fff" stroke="#222" strokeWidth=".8" /></I16></IconBtn>
                <IconBtn label="删除表格" off><I16><path d="M1.500 2h11v10h-11zM1.500 5.500h11M1.500 9h11M5 2v10M9 2v10" fill="#ddd" /><path d="M1.500 2h11v2h-11z" fill="currentColor" /><path d="m10 10 5 5m0-5-5 5" strokeWidth="2" /></I16></IconBtn>
              </div>
            </div>
          </Group>
          <Group title="常规" className="mt-[3px] h-[61px]">
            <div className="flex items-center pr-[7px] pl-[7px]">
              <Lab id="dir" text="表格方向" k="D" />
              <Select id="dir" value="向下" width="w-[101px]" />
            </div>
          </Group>
          <div className="mt-[7px] flex h-[236px] justify-center border-2 border-[#8c8c8c] border-r-white border-b-white bg-[#1f2830] pt-1">
            <PreviewTable />
          </div>
        </div>
        <Group title="单元样式" className="h-[366px] flex-1">
          <div className="flex items-center pt-[3px] pl-[5px]">
            <Select id="cell" label="单元样式" value="数据" width="w-[163px]" />
            <div className="ml-[7px] flex gap-[5px]">
              <IconBtn label="创建新单元样式"><I16>{gridIcon}<path d="M8 9 4 14c2 1 5 1 7-2z" fill="#8a5a34" stroke="#5f3b1f" strokeWidth=".6" /><path d="M12 1v6M9 4h6M10 2l4 4M14 2l-4 4" stroke="#f08a24" strokeWidth="1.200" /></I16></IconBtn>
              <IconBtn label="管理单元样式"><I16>{gridIcon}<path d="m9 10 4-4 2 1-3 5z" fill="#eee" stroke="#666" strokeWidth=".7" /><path d="m9 9-4 5c2 1 5 1 7-2z" fill="#8a5a34" stroke="#5f3b1f" strokeWidth=".6" /></I16></IconBtn>
            </div>
          </div>
          <div role="tablist" className="mt-1 flex h-5 items-end pl-[6px] text-[11px]">
            <button role="tab" className="h-[18px] w-[44px] border border-b-0 border-[#d9d9d9] bg-[#f0f0f0] pr-3 leading-none">常规</button>
            <button role="tab" aria-selected="true" className="h-5 w-12 border border-b-0 border-[#e6e6e6] bg-white pr-3 leading-none">文字</button>
            <button role="tab" className="h-[18px] w-[42px] border border-b-0 border-[#d9d9d9] bg-[#f0f0f0] pr-3 leading-none">边框</button>
          </div>
          <div className="mr-[13px] ml-[5px] h-[221px] border border-[#dcdcdc] bg-white px-[11px] pt-[2px]">
            <Group title="特性" className="mr-[-2px] h-[122px]">
              <div className="flex h-[25px] items-center pr-[6px] pl-[7px]">
                <Lab id="st" text="文字样式" k="S" />
                <Select id="st" value="Standard" width="w-[104px]" latin />
                <button aria-label="文字样式设置" className={`${mono} ml-[5px] h-[19px] w-6 border border-[#adadad] bg-[#e1e1e1] text-[10px] leading-none`}>...</button>
              </div>
              <div className="flex h-[25px] items-center pr-[35px] pl-[7px]">
                <Lab id="ht" text="文字高度" k="I" />
                <input id="ht" defaultValue="4.5" className={`${mono} h-[19px] w-[104px] border border-[#7a7a7a] bg-white pl-[2px] text-[10px] outline-none`} />
              </div>
              <div className="flex h-[25px] items-center pr-[35px] pl-[7px]">
                <Lab id="co" text="文字颜色" k="C" />
                <Select id="co" value="ByBlock" width="w-[104px]" latin swatch />
              </div>
              <div className="flex h-[25px] items-center pr-[35px] pl-[7px]">
                <Lab id="an" text="文字角度" k="G" />
                <input id="an" defaultValue="0" className={`${mono} h-[19px] w-[104px] border border-[#7a7a7a] bg-white pl-[2px] text-[10px] outline-none`} />
              </div>
            </Group>
          </div>
          <Group title="单元样式预览" className="mt-[5px] mr-2 ml-[5px] h-[64px]">
            <div className="mx-1 mt-[3px] flex h-[41px] items-center justify-center border-2 border-[#8c8c8c] border-r-white border-b-white bg-[#1f2830]">
              <table className="border-collapse text-white">
                <tbody>
                  {[0, 1].map((r) => (
                    <tr key={r} className="h-[15px]">
                      {[0, 1].map((c) => <td key={c} className="w-[13px] border border-[#eee] p-0 text-center text-[6px] leading-[7px] font-black">数<br />据</td>)}
                    </tr>
                  ))}
                </tbody>
              </table>
            </div>
          </Group>
        </Group>
      </div>
      <div className="flex justify-end gap-2 pt-[6px] pr-[10px]">
        <Btn primary>确定</Btn>
        <Btn>取消</Btn>
        <Btn>帮助<span className={`${mono} text-[10px]`}>(H)</span></Btn>
      </div>
    </div>
  );
}

/* ---------- overlays ---------- */

const outline = "[-webkit-text-stroke:6px_#262626] [paint-order:stroke_fill]";

function VideoLogo() {
  return (
    <div className="pointer-events-none absolute top-[44px] left-[50px] flex h-11 items-center text-white italic">
      <span className={`${outline} text-[33px] leading-none font-bold`}>秒</span>
      <span className={`${outline} text-[36px] leading-none font-medium [font-family:'Inter',sans-serif]`}>d</span>
      <svg viewBox="0 0 24 34" className="-mx-px h-[34px] w-6" aria-hidden="true">
        <path d="m8 3 4 4 5-6" stroke="#262626" strokeWidth="6" fill="none" />
        <circle cx="12" cy="24" r="10.500" fill="#262626" />
        <circle cx="12" cy="24" r="9" fill="#2f86ea" />
        <path d="M9 19v10l8-5z" fill="#fff" />
        <path d="m8 3 4 4 5-6" stroke="#f2c51d" strokeWidth="3" fill="none" />
      </svg>
      <span className={`${outline} text-[32px] leading-none font-medium [font-family:'Inter',sans-serif]`}>ng</span>
      <span className={`${outline} text-[33px] leading-none font-bold`}>视频</span>
    </div>
  );
}

function SiteMark() {
  return (
    <div className="pointer-events-none absolute right-[71px] bottom-[18px] z-20 flex h-[115px] w-[235px] items-center gap-[17px] bg-[#223057] pl-[14px] text-[#c9cdd6]">
      <svg viewBox="0 0 48 50" className="h-[50px] w-12 shrink-0" fill="none" stroke="currentColor" aria-hidden="true">
        <path d="M4.500 6C3 8 2.500 10 2.500 13v24c0 8 6 12 13 9l24-14c6-4 6-11 0-15L20 4c-5-3-9-1-9 4v26c0 4 2 5 6 4" strokeWidth="4" />
        <path d="M19 18v12l9-6z" fill="currentColor" stroke="none" />
        <path d="M31.500 19v10" strokeWidth="1.500" />
      </svg>
      <div className="flex flex-col pb-[2px]">
        <span className="text-[36px] leading-9 font-bold">溜溜自学</span>
        <span className="text-[17px] leading-5 whitespace-nowrap [font-family:'DejaVu_Sans',sans-serif]">zixue.3D66.COM</span>
      </div>
    </div>
  );
}

export default function App() {
  return (
    <div className="relative flex h-screen w-full flex-col overflow-hidden bg-[#373737] [font-family:'Noto_Sans_CJK_SC','Noto_Sans',sans-serif]">
      <header className="flex h-11 shrink-0 bg-[#4c4c4c]">
        <button aria-label="应用程序菜单" className="flex h-[41px] w-[39px] shrink-0 items-center gap-[2px] border border-[#1c1c1c] bg-gradient-to-b from-[#8c8c8c] to-[#707070] pb-[5px] pl-[3px] text-[#222]">
          <ALogo className="h-[30px] w-[26px]" />
          <Tri className="h-[3px] w-[5px]" />
        </button>
        <div className="flex min-w-0 flex-1 flex-col">
          <TitleBar />
          <RibbonTabs />
        </div>
      </header>
      <Ribbon />
      <FileTabs />
      <Canvas />
      <LayoutTabs />
      <StatusBar />
      <InsertTableDialog />
      <NewTableStyleDialog />
      <VideoLogo />
      <ImeBar />
      <SiteMark />
      <svg viewBox="0 0 12 19" className="pointer-events-none absolute top-[561px] left-[730px] h-[19px] w-3" aria-hidden="true">
        <path d="M.5.5v15l3.500-3.500 2.500 6 2.500-1-2.500-5.500h5z" fill="#fff" stroke="#222" />
      </svg>
    </div>
  );
}
